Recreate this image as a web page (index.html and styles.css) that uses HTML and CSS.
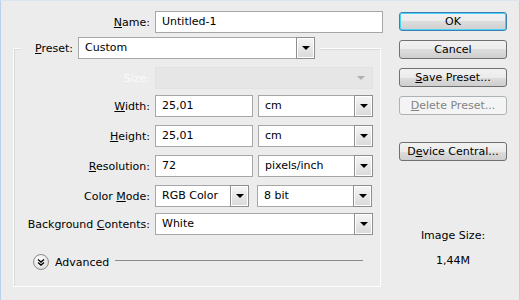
FILE: index.html
```html
<!DOCTYPE html>
<html lang="en">
<head>
<meta charset="UTF-8">
<meta name="viewport" content="width=device-width, initial-scale=1.0">
<title>New</title>
<link rel="stylesheet" href="styles.css">
</head>
<body>
<div class="dialog">
    <div class="main">
        <div class="row name-row">
            <label class="lbl name-lbl"><u>N</u>ame:</label>
            <div class="field name-field">Untitled-1</div>
        </div>

        <fieldset class="group">
            <legend class="preset">
                <span class="preset-lbl"><u>P</u>reset:</span>
                <div class="combo preset-combo"><span class="val">Custom</span><span class="arrow"></span></div>
            </legend>

            <div class="row size-row">
                <label class="lbl off">Size:</label>
                <div class="combo wide off"><span class="val"></span><span class="arrow"></span></div>
            </div>
            <div class="row">
                <label class="lbl"><u>W</u>idth:</label>
                <div class="field num">25,01</div>
                <div class="combo unit"><span class="val">cm</span><span class="arrow"></span></div>
            </div>
            <div class="row">
                <label class="lbl"><u>H</u>eight:</label>
                <div class="field num">25,01</div>
                <div class="combo unit"><span class="val">cm</span><span class="arrow"></span></div>
            </div>
            <div class="row">
                <label class="lbl"><u>R</u>esolution:</label>
                <div class="field num">72</div>
                <div class="combo unit"><span class="val">pixels/inch</span><span class="arrow"></span></div>
            </div>
            <div class="row">
                <label class="lbl">Color <u>M</u>ode:</label>
                <div class="combo mode"><span class="val">RGB Color</span><span class="arrow"></span></div>
                <div class="combo unit bits"><span class="val">8 bit</span><span class="arrow"></span></div>
            </div>
            <div class="row bg-row">
                <label class="lbl">Background <u>C</u>ontents:</label>
                <div class="combo wide"><span class="val">White</span><span class="arrow"></span></div>
            </div>

            <div class="advanced">
                <svg class="adv-icon" width="16" height="16" viewBox="0 0 16 16">
                    <defs>
                        <radialGradient id="knob" cx="0.4" cy="0.35" r="0.7">
                            <stop offset="0" stop-color="#ffffff"/>
                            <stop offset="1" stop-color="#dadada"/>
                        </radialGradient>
                    </defs>
                    <circle cx="8" cy="8" r="7.5" fill="url(#knob)" stroke="#8c8c8c"/>
                    <path d="M5 5.5l3 2.5 3-2.5M5 8.5l3 2.5 3-2.5" fill="none" stroke="#000" stroke-width="1.4"/>
                </svg>
                <span class="adv-text">Advanced</span>
                <span class="adv-line"></span>
            </div>
        </fieldset>
    </div>

    <div class="side">
        <button class="btn default">OK</button>
        <button class="btn">Cancel</button>
        <button class="btn"><u>S</u>ave Preset...</button>
        <button class="btn" disabled><u>D</u>elete Preset...</button>
        <button class="btn device">D<u>e</u>vice Central...</button>

        <div class="info">
            <div>Image Size:</div>
            <div class="info-val">1,44M</div>
        </div>
    </div>
</div>
</body>
</html>
```

FILE: styles.css
```css
body {
    margin: 0;
    background-color: #ececec;
    font-family: "DejaVu Sans", Verdana, sans-serif;
    font-size: 11px;
    color: #000;
}
.dialog {
    display: flex;
    height: 300px;
    box-sizing: border-box;
    border-left: 1px solid #b9d1ea;
    border-right: 1px solid #b9d1ea;
    border-top: 1px solid #dce6f0;
}
.main {
    width: 371px;
    padding-left: 12px;
}
.side {
    width: 108px;
    margin-left: 15px;
    padding-top: 11px;
}
.row {
    display: flex;
    align-items: center;
    height: 22px;
    margin-top: 8px;
}
.lbl {
    width: 136px;
    padding-right: 5px;
    text-align: right;
    white-space: nowrap;
}
.name-row {
    margin-top: 10px;
}
.name-lbl {
    width: 137px;
}
.lbl.off {
    color: #fbfbfb;
}
.field {
    height: 22px;
    box-sizing: border-box;
    border: 1px solid #a7a7a7;
    background-color: #fff;
    padding-left: 6px;
    line-height: 20px;
}
.name-field {
    width: 228px;
}
.num {
    width: 98px;
}
.combo {
    display: flex;
    height: 22px;
    box-sizing: border-box;
    border: 1px solid #a7a7a7;
    background-color: #fff;
}
.combo .val {
    flex: 1;
    padding-left: 6px;
    line-height: 20px;
    white-space: nowrap;
}
.combo .arrow {
    width: 17px;
    margin: -1px -1px -1px 0;
    border: 1px solid #8e8e8e;
    box-shadow: inset 0 0 0 1px #fff;
    background: linear-gradient(#f6f6f6, #d9d9d9);
    display: flex;
    align-items: center;
    justify-content: center;
}
.combo .arrow::after {
    content: "";
    border-left: 4px solid transparent;
    border-right: 4px solid transparent;
    border-top: 4px solid #000;
}
.combo.off {
    background-color: #e6e6e6;
    border-color: #e2e2e2;
}
.combo.off .arrow {
    border: none;
    box-shadow: none;
    background: none;
    margin: 0 3px 0 0;
}
.combo.off .arrow::after {
    border-top-color: #b0b0b0;
}
.unit {
    width: 115px;
    margin-left: 5px;
}
.mode {
    width: 94px;
}
.bits {
    margin-left: 8px;
}
.wide {
    width: 218px;
}
.size-row {
    margin-top: 8px;
}
.size-row + .row,
.bg-row {
    margin-top: 6px;
}
.group {
    width: 368px;
    box-sizing: border-box;
    margin: 4px 0 0 0;
    padding: 0 0 16px 0;
    border: 1px solid #fdfdfd;
    box-shadow: inset 1px 1px 0 #dadada;
}
.preset {
    display: flex;
    align-items: center;
    margin-left: 7px;
    padding: 0 5px 0 14px;
    background-color: #ececec;
}
.preset-lbl {
    padding-right: 5px;
}
.preset-combo {
    width: 237px;
}
.advanced {
    display: flex;
    align-items: center;
    height: 16px;
    margin: 19px 17px 0 19px;
}
.adv-icon {
    display: block;
}
.adv-text {
    margin-left: 6px;
}
.adv-line {
    flex: 1;
    margin: -3px 0 0 6px;
    border-top: 1px solid #8a8a8a;
}
.btn {
    display: block;
    width: 108px;
    height: 19px;
    margin-bottom: 9px;
    padding: 0;
    box-sizing: border-box;
    border: 1px solid #707070;
    border-radius: 3px;
    background: linear-gradient(#f2f2f2 0%, #ebebeb 50%, #dddddd 50%, #cfcfcf 100%);
    font-family: inherit;
    font-size: 11px;
    color: #000;
    line-height: 17px;
}
.btn.default {
    border-color: #3c7fb1;
    box-shadow: inset 0 0 0 1px #4cd2f6;
}
.btn:disabled {
    border-color: #adb2b5;
    background: #f4f4f4;
    color: #838383;
}
.btn.device {
    margin-top: 27px;
}
.info {
    margin-top: 67px;
    text-align: center;
    line-height: 16px;
}
.info-val {
    margin-top: 9px;
}
```
